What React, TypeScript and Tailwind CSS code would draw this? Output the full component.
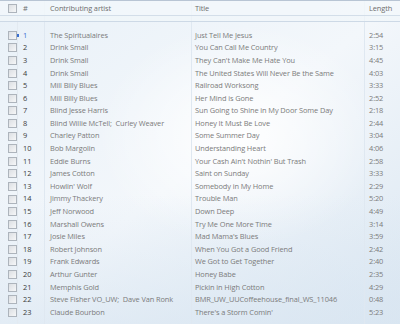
import React from 'react'

const tracks: [string, string, string][] = [
  ['The Spiritualaires', 'Just Tell Me Jesus', '2:54'],
  ['Drink Small', 'You Can Call Me Country', '3:15'],
  ['Drink Small', "They Can't Make Me Hate You", '4:45'],
  ['Drink Small', 'The United States Will Never Be the Same', '4:03'],
  ['Mill Billy Blues', 'Railroad Worksong', '3:33'],
  ['Mill Billy Blues', 'Her Mind is Gone', '2:52'],
  ['Blind Jesse Harris', 'Sun Going to Shine in My Door Some Day', '2:18'],
  ['Blind Willie McTell;  Curley Weaver', 'Honey It Must Be Love', '2:44'],
  ['Charley Patton', 'Some Summer Day', '3:04'],
  ['Bob Margolin', 'Understanding Heart', '4:06'],
  ['Eddie Burns', "Your Cash Ain't Nothin' But Trash", '2:58'],
  ['James Cotton', 'Saint on Sunday', '3:33'],
  ["Howlin' Wolf", 'Somebody in My Home', '2:29'],
  ['Jimmy Thackery', 'Trouble Man', '5:20'],
  ['Jeff Norwood', 'Down Deep', '4:49'],
  ['Marshall Owens', 'Try Me One More Time', '3:14'],
  ['Josie Miles', "Mad Mama's Blues", '3:59'],
  ['Robert Johnson', 'When You Got a Good Friend', '2:42'],
  ['Frank Edwards', 'We Got to Get Together', '2:40'],
  ['Arthur Gunter', 'Honey Babe', '2:35'],
  ['Memphis Gold', 'Pickin in High Cotton', '4:29'],
  ['Steve Fisher VO_UW;  Dave Van Ronk', 'BMR_UW_UUCoffeehouse_final_WS_11046', '0:48'],
  ['Claude Bourbon', "There's a Storm Comin'", '5:23'],
]

function Box() {
  return <span className="block h-[9px] w-[9px] shrink-0 border border-[#adb4bc] bg-gradient-to-br from-[#dcdfe3] to-[#f6f7f8]" />
}

export default function App() {
  return (
    <div
      className="relative h-[324px] w-[400px] overflow-hidden text-[7.4px] tracking-[-0.1px] text-[#7b7b7b]"
      style={{ fontFamily: '"Open Sans", "Noto Sans", sans-serif' }}
    >
      <div className="absolute inset-0 bg-gradient-to-br from-[#e9f1f8] via-[#f3f7fb] to-[#dbe7f2]" />
      <div className="absolute inset-0 bg-[radial-gradient(ellipse_at_60%_42%,rgba(255,255,255,0.95)_0%,rgba(255,255,255,0)_42%)]" />
      <div className="absolute inset-0 bg-gradient-to-t from-[#d8e5f1]/60 to-transparent to-40%" />

      {/* column dividers */}
      <div className="pointer-events-none absolute inset-0 flex">
        <div className="w-[18px] border-r border-[#e3eaf1]" />
        <div className="w-[27px] border-r border-[#dfe8f1]" />
        <div className="w-[147px] border-r border-[#dfe8f1]" />
        <div className="w-[173px] border-r border-[#dfe8f1]" />
      </div>

      <div className="relative flex flex-col">
        <div className="flex h-[16px] items-center border-t border-b border-t-[#b8c5d4] border-b-[#d3dee9] bg-[#f3f7fb]/80 pt-[1px] text-[#6e6e6e]">
          <div className="flex w-[18px] pl-[8px]"><Box /></div>
          <div className="w-[27px] pl-[5px]">#</div>
          <div className="w-[147px] pl-[5px]">Contributing artist</div>
          <div className="w-[173px] pl-[3px]">Title</div>
          <div className="pl-[4px]">Length</div>
        </div>
        <div className="h-[6px] border-b border-[#cdd9e6] bg-[#f1f6fa]/70" />
        <div className="flex flex-col pt-[7px]">
          {tracks.map(([artist, title, len], i) => (
            <div key={i} className="flex h-[12.6px] items-center">
              <div className="relative flex w-[18px] pl-[8px]">
                <Box />
                {i === 0 && <span className="absolute left-[17px] top-[3px] h-[3px] w-[2px] bg-[#3a6fd0]" />}
              </div>
              <div className={`w-[27px] pl-[5px] ${i === 0 ? 'text-[#3a6fd0]' : 'text-[#3a3a3a]'}`}>{i + 1}</div>
              <div className="w-[147px] whitespace-pre pl-[5px]">{artist}</div>
              <div className="w-[173px] whitespace-pre pl-[3px]">{title}</div>
              <div className="pl-[4px]">{len}</div>
            </div>
          ))}
        </div>
      </div>
    </div>
  )
}
